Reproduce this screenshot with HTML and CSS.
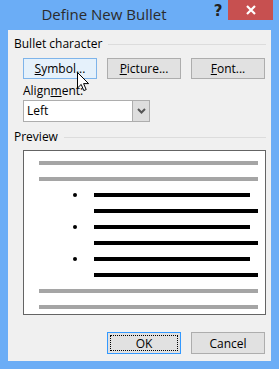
FILE: index.html
```html
<!DOCTYPE html>
<html lang="en">
<head>
    <meta charset="UTF-8">
    <title>Define New Bullet</title>
    <link rel="stylesheet" href="styles.css">
</head>
<body>

    <div class="window">

        <!-- Title bar -->
        <div class="titlebar">
            <div class="title">Define New Bullet</div>
            <div class="help">?</div>
            <div class="close">
                <svg width="12" height="12" viewBox="0 0 12 12">
                    <path d="M2 2 L10 10 M10 2 L2 10" stroke="#fff" stroke-width="2.2"/>
                </svg>
            </div>
        </div>

        <div class="client">

            <!-- Bullet character group -->
            <div class="group-head"><span>Bullet character</span><div class="rule"></div></div>
            <div class="btn-row">
                <button class="btn hot"><u>S</u>ymbol...</button>
                <button class="btn"><u>P</u>icture...</button>
                <button class="btn"><u>F</u>ont...</button>
            </div>
            <div class="field-label">Align<u>m</u>ent:</div>
            <div class="select">
                <div class="select-text">Left</div>
                <div class="select-arrow">
                    <svg width="9" height="6" viewBox="0 0 9 6">
                        <path d="M1 1 L4.5 4.5 L8 1" stroke="#555" stroke-width="2" fill="none"/>
                    </svg>
                </div>
            </div>

            <!-- Preview group -->
            <div class="group-head preview-head"><span>Preview</span><div class="rule"></div></div>
            <div class="preview">
                <div class="line grey"></div>
                <div class="line grey"></div>
                <div class="bullet-row"><div class="dot"></div><div class="line short"></div></div>
                <div class="line long"></div>
                <div class="bullet-row"><div class="dot"></div><div class="line short"></div></div>
                <div class="line long"></div>
                <div class="bullet-row"><div class="dot"></div><div class="line short"></div></div>
                <div class="line long"></div>
                <div class="line grey"></div>
                <div class="line grey"></div>
            </div>

            <!-- Dialog buttons -->
            <div class="footer">
                <button class="btn default"><span class="focus">OK</span></button>
                <button class="btn">Cancel</button>
            </div>
        </div>

        <!-- Mouse pointer over the Symbol button -->
        <svg class="cursor" width="13" height="20" viewBox="0 0 13 20">
            <path d="M0.5 0.5 L0.5 16 L4.2 12.4 L6.8 18.6 L9.2 17.6 L6.6 11.6 L11.6 11.6 Z" fill="#fff" stroke="#000" stroke-width="1"/>
        </svg>
    </div>

</body>
</html>
```

FILE: styles.css
```css
body {
    margin: 0;
    padding: 0;
    font-family: 'Open Sans', 'Noto Sans', sans-serif;
    font-size: 12px;
    color: #000;
}

.window {
    position: relative;
    width: 279px;
    height: 369px;
    background-color: #6badf6;
    display: flex;
    flex-direction: column;
}

.titlebar {
    height: 30px;
    display: flex;
    align-items: flex-start;
}

.title {
    width: 208px;
    text-align: center;
    font-size: 15px;
    color: #2b2b2b;
    line-height: 15px;
    padding-top: 7px;
}

.help {
    width: 20px;
    font-size: 15px;
    font-weight: bold;
    color: #222;
    font-family: 'DejaVu Sans', sans-serif;
    line-height: 14px;
    padding-top: 4px;
    text-align: center;
}

.close {
    width: 45px;
    height: 20px;
    background-color: #c75050;
    display: flex;
    justify-content: center;
    align-items: center;
}

.client {
    flex: 1;
    margin: 0 8px 8px 8px;
    background-color: #f0f0f0;
    display: flex;
    flex-direction: column;
    padding: 6px 5px 0 6px;
}

.group-head {
    display: flex;
    align-items: center;
    height: 16px;
}

.group-head span {
    line-height: 16px;
}

.rule {
    flex: 1;
    height: 1px;
    background-color: #dcdcdc;
    margin-left: 6px;
}

.btn-row {
    display: flex;
    gap: 10px;
    margin: 6px 0 0 9px;
}

.btn {
    width: 74px;
    height: 21px;
    box-sizing: border-box;
    border: 1px solid #adadad;
    background-color: #e1e1e1;
    font-family: inherit;
    font-size: 12px;
    color: #000;
    padding: 0;
    margin: 0;
    display: flex;
    justify-content: center;
    align-items: center;
}

.btn.hot {
    border-color: #7eb4ea;
    background-color: #e5f1fb;
}

.btn.default {
    border-color: #3399ff;
    padding: 2px;
}

.focus {
    flex: 1;
    align-self: stretch;
    border: 1px dotted #000;
    display: flex;
    justify-content: center;
    align-items: center;
}

.field-label {
    margin: 4px 0 0 9px;
    line-height: 16px;
}

.select {
    margin: 1px 0 0 9px;
    width: 127px;
    height: 22px;
    box-sizing: border-box;
    border: 1px solid #adadad;
    background-color: #fff;
    display: flex;
}

.select-text {
    flex: 1;
    padding-left: 3px;
    line-height: 20px;
}

.select-arrow {
    width: 16px;
    background-color: #dedede;
    border-left: 1px solid #adadad;
    display: flex;
    justify-content: center;
    align-items: center;
}

.preview-head {
    margin-top: 7px;
}

.preview {
    margin: 5px 0 0 9px;
    height: 165px;
    box-sizing: border-box;
    border: 1px solid #646464;
    background-color: #fff;
    padding: 10px 7px 0 15px;
    display: flex;
    flex-direction: column;
    gap: 12px;
}

.line {
    height: 4px;
}

.line.grey {
    background-color: #a5a5a5;
}

.line.long {
    background-color: #000;
    margin-left: 55px;
}

.bullet-row {
    display: flex;
    align-items: center;
    height: 4px;
}

.dot {
    width: 4px;
    height: 4px;
    border-radius: 50%;
    background-color: #000;
    margin-left: 34px;
}

.line.short {
    width: 156px;
    height: 4px;
    background-color: #000;
    margin-left: 17px;
}

.footer {
    display: flex;
    gap: 10px;
    margin: 17px 0 0 93px;
}

.footer .btn {
    height: 22px;
}

.cursor {
    position: absolute;
    left: 77px;
    top: 72px;
}
```
